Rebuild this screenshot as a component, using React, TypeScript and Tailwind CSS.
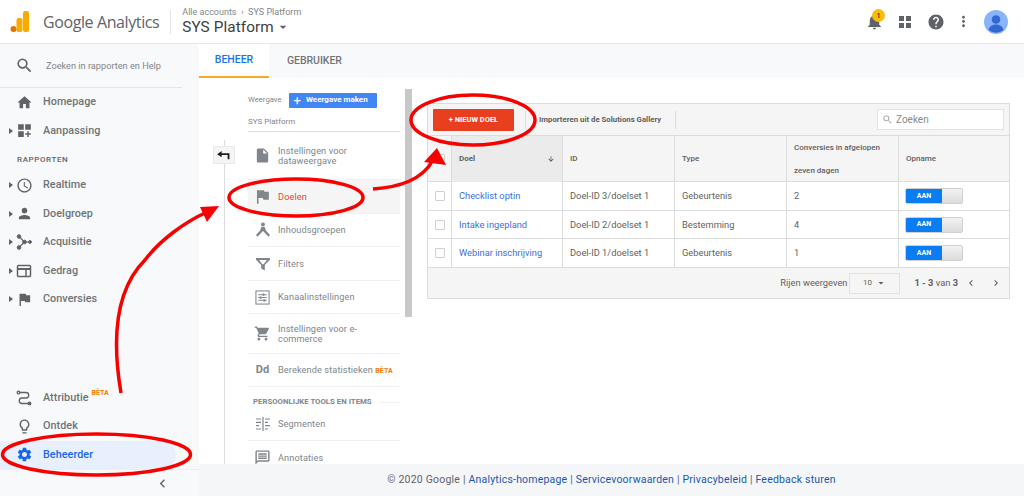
import type { ReactNode } from "react";
import {
  MdAccessTime,
  MdArrowDownward,
  MdArrowDropDown,
  MdChevronLeft,
  MdChevronRight,
  MdDashboardCustomize,
  MdFlag,
  MdHelp,
  MdHome,
  MdInsertDriveFile,
  MdLightbulbOutline,
  MdMoreVert,
  MdNotifications,
  MdOutlineMessage,
  MdPerson,
  MdSearch,
  MdSettings,
  MdShoppingCart,
} from "react-icons/md";

function AcquisitionIcon() {
  return (
    <svg viewBox="0 0 16 16" className="h-4 w-4 fill-[#5f6368] stroke-[#5f6368]">
      <circle cx="3" cy="2.5" r="1.8" />
      <circle cx="3" cy="13.5" r="1.8" />
      <circle cx="8.5" cy="8" r="1.8" />
      <circle cx="14" cy="8" r="1.4" />
      <path d="M3 2.5 8.5 8 3 13.5M8.5 8H14" fill="none" strokeWidth="1.2" />
    </svg>
  );
}

function BehaviourIcon() {
  return (
    <svg viewBox="0 0 16 16" className="h-4 w-4 fill-none stroke-[#5f6368]" strokeWidth="1.5">
      <rect x="1.5" y="2.5" width="13" height="11" rx="1" />
      <path d="M1.5 6h13" strokeWidth="2" />
      <path d="M10 6v7.5" />
    </svg>
  );
}

function AttributionIcon() {
  return (
    <svg viewBox="0 0 16 16" className="h-4 w-4 fill-none stroke-[#5f6368]" strokeWidth="1.3">
      <circle cx="2.5" cy="2.5" r="1.3" />
      <circle cx="13.5" cy="13.5" r="1.3" fill="#5f6368" />
      <path d="M4 2.5h6a2.7 2.7 0 0 1 0 5.5H6a2.7 2.7 0 0 0 0 5.5h6" />
    </svg>
  );
}

function GroupsIcon() {
  return (
    <svg viewBox="0 0 16 16" className="h-4 w-4 fill-[#80868b]">
      <circle cx="8" cy="2.6" r="2" />
      <path d="M6.3 5h3.4l1.2 3.4L15 13l-1.500 1.800-4-4.200-1.500-1.700-1.500 1.700-4 4.200L1 13l4.100-4.600z" />
    </svg>
  );
}

function FilterIcon() {
  return (
    <svg viewBox="0 0 16 16" className="h-4 w-4">
      <path d="M1 2h14v1.800L9.800 9v5.500L6.200 12.500V9L1 3.800zM4 4l3.400 4.200h1.200L12 4z" fill="#80868b" fillRule="evenodd" />
    </svg>
  );
}

function ChannelIcon() {
  return (
    <svg viewBox="0 0 16 16" className="h-[15px] w-[15px] fill-none stroke-[#80868b]" strokeWidth="1.1">
      <rect x="1" y="1" width="14" height="14" />
      <path d="M3.500 5h9M3.500 8h9M3.500 11h9" />
      <path d="M9 3.800v2.400M6 6.800v2.400M10 9.800v2.400" strokeWidth="1.8" />
    </svg>
  );
}

function SegmentsIcon() {
  return (
    <svg viewBox="0 0 16 16" className="h-4 w-4 fill-none stroke-[#80868b]" strokeWidth="1.2">
      <path d="M8 1v14M1 3h5M1 6.300h5M1 9.700h3M1 13h5M10 3h5M10 6.300h3M10 9.700h5M10 13h3" />
    </svg>
  );
}

function BackIcon() {
  return (
    <svg viewBox="0 0 14 12" className="h-[11px] w-[13px] fill-[#202124]">
      <path d="M0 4.500 5 1v2.500h8.500V10H11.500V5.500H5V8z" />
    </svg>
  );
}

function SideItem({
  icon,
  label,
  caret,
  badge,
  active,
}: {
  icon: ReactNode;
  label: string;
  caret?: boolean;
  badge?: boolean;
  active?: boolean;
}) {
  return (
    <div
      className={`flex h-[28.5px] w-[176px] shrink-0 items-center rounded-r-[14px] ${active ? "bg-[#e8f0fe] text-[#1a66e8]" : "text-[#6f7377]"}`}
    >
      <span className="flex w-[13px] justify-end">
        {caret && <span className="h-0 w-0 border-y-[3px] border-l-[4px] border-y-transparent border-l-[#5f6368]" />}
      </span>
      <span className="flex w-[22px] justify-center">{icon}</span>
      <span className="ml-[8px] text-[10.8px] font-medium tracking-[0.05px]">{label}</span>
      {badge && <span className="mb-[9px] ml-[3px] text-[7px] font-bold text-[#f57c00]">BÈTA</span>}
    </div>
  );
}

function Sidebar() {
  const ic = "h-[17px] w-[17px] text-[#5f6368]";
  return (
    <aside className="flex w-[199px] shrink-0 flex-col bg-[#f8f9fa]">
      <div className="flex h-[44px] w-[182px] shrink-0 items-center border-b border-[#e3e5e8] pl-[15px]">
        <MdSearch className="h-[19px] w-[19px] text-[#5f6368]" />
        <span className="ml-[12px] whitespace-nowrap text-[9.2px] text-[#80868b]">Zoeken in rapporten en Help</span>
      </div>
      <SideItem icon={<MdHome className={ic} />} label="Homepage" />
      <SideItem caret icon={<MdDashboardCustomize className={ic} />} label="Aanpassing" />
      <div className="flex h-[26px] shrink-0 items-center pl-[17px] pt-[4px] text-[8px] font-medium tracking-[0.6px] text-[#5f6368]">RAPPORTEN</div>
      <SideItem caret icon={<MdAccessTime className={ic} />} label="Realtime" />
      <SideItem caret icon={<MdPerson className={ic} />} label="Doelgroep" />
      <SideItem caret icon={<AcquisitionIcon />} label="Acquisitie" />
      <SideItem caret icon={<BehaviourIcon />} label="Gedrag" />
      <SideItem caret icon={<MdFlag className={ic} />} label="Conversies" />
      <div className="flex-1" />
      <SideItem icon={<AttributionIcon />} label="Attributie" badge />
      <SideItem icon={<MdLightbulbOutline className={ic} />} label="Ontdek" />
      <SideItem active icon={<MdSettings className="h-[17px] w-[17px] text-[#1a66e8]" />} label="Beheerder" />
      <div className="flex h-[27px] shrink-0 items-center justify-end border-t border-[#eceef0] pr-[28px]">
        <MdChevronLeft className="h-[17px] w-[17px] text-[#5f6368]" />
      </div>
    </aside>
  );
}

function NavItem({
  icon,
  children,
  h,
  selected,
  last,
}: {
  icon: ReactNode;
  children: ReactNode;
  h: string;
  selected?: boolean;
  last?: boolean;
}) {
  return (
    <div className={`flex shrink-0 items-center ${h} ${selected ? "bg-[#f5f5f5] text-[#ea4335]" : "text-[#80868b]"} ${last ? "" : "border-b border-[#f1f1f1]"}`}>
      <span className="ml-[3px] flex w-[23px] justify-center">{icon}</span>
      <span className="ml-[4px] whitespace-nowrap text-[9.2px] leading-[10px] tracking-[0.1px]">{children}</span>
    </div>
  );
}

function AdminNav() {
  const ic = "h-[17px] w-[17px] text-[#80868b]";
  return (
    <div className="flex w-[152px] shrink-0 flex-col pt-[13px]">
      <div className="flex h-[18px] shrink-0 items-center">
        <span className="text-[7.7px] text-[#80868b]">Weergave</span>
        <span className="ml-[7px] flex h-[15px] w-[88px] items-center rounded-[1px] bg-[#4285f4] pl-[5px] text-[8px] font-bold text-white">
          <span className="mr-[5px] text-[13px] font-normal leading-none">+</span>Weergave maken
        </span>
      </div>
      <div className="flex h-[23px] shrink-0 items-center border-b border-[#dadce0] pt-[3px] text-[8px] text-[#80868b]">SYS Platform</div>
      <NavItem h="h-[48px]" icon={<MdInsertDriveFile className={ic} />}>
        Instellingen voor
        <br />
        dataweergave
      </NavItem>
      <NavItem h="h-[34px]" selected icon={<MdFlag className="h-[19px] w-[19px] text-[#80868b]" />}>
        Doelen
      </NavItem>
      <NavItem h="h-[33px]" icon={<GroupsIcon />}>
        Inhoudsgroepen
      </NavItem>
      <NavItem h="h-[34px]" icon={<FilterIcon />}>
        Filters
      </NavItem>
      <NavItem h="h-[33px]" icon={<ChannelIcon />}>
        Kanaalinstellingen
      </NavItem>
      <NavItem h="h-[40px]" icon={<MdShoppingCart className={ic} />}>
        Instellingen voor e-
        <br />
        commerce
      </NavItem>
      <NavItem h="h-[33px]" icon={<span className="text-[11px] font-bold text-[#80868b]">Dd</span>}>
        Berekende statistieken <span className="text-[7px] font-bold text-[#f57c00]">BÈTA</span>
      </NavItem>
      <div className="flex h-[21px] shrink-0 items-center pl-[5px] pt-[9px]">
        <span className="whitespace-nowrap text-[7.8px] font-bold text-[#80868b]">PERSOONLIJKE TOOLS EN ITEMS</span>
        <span className="ml-[7px] h-px flex-1 bg-[#f1f1f1]" />
      </div>
      <NavItem h="h-[33px]" icon={<SegmentsIcon />}>
        Segmenten
      </NavItem>
      <NavItem h="h-[33px]" last icon={<MdOutlineMessage className={ic} />}>
        Annotaties
      </NavItem>
    </div>
  );
}

const goals = [
  { name: "Checklist optin", id: "Doel-ID 3/doelset 1", type: "Gebeurtenis", count: "2" },
  { name: "Intake ingepland", id: "Doel-ID 2/doelset 1", type: "Bestemming", count: "4" },
  { name: "Webinar inschrijving", id: "Doel-ID 1/doelset 1", type: "Gebeurtenis", count: "1" },
];

const gridCols = "grid grid-cols-[24px_111px_112px_112px_112px_1fr]";

function GoalsTable() {
  return (
    <div className="flex h-[196px] w-[583px] flex-col border border-[#dcdcdc] bg-[#f5f5f5]">
      <div className="flex h-[31px] shrink-0 items-center">
        <span className="ml-[5px] flex h-[22px] w-[81px] items-center justify-center rounded-[1px] bg-[#e8401f] text-[7.5px] font-bold text-white">
          + NIEUW DOEL
        </span>
        <span className="ml-[11px] h-[18px] w-px bg-[#dcdcdc]" />
        <span className="ml-[13px] text-[7.8px] font-bold text-[#5f5f5f]">Importeren uit de Solutions Gallery</span>
        <span className="ml-[14px] h-[18px] w-px bg-[#dcdcdc]" />
        <div className="ml-auto mr-[5px] flex h-[21px] w-[127px] items-center border border-[#e3e3e3] bg-white pl-[4px] text-[#8a8a8a]">
          <MdSearch className="h-[11px] w-[11px] text-[#a0a0a0]" />
          <span className="ml-[3px] text-[10px]">Zoeken</span>
        </div>
      </div>
      <div className={`${gridCols} h-[47px] shrink-0 border-y border-[#dcdcdc] text-[8px] font-medium text-[#5f5f5f]`}>
        <div className="flex items-center justify-center border-r border-[#dcdcdc]">
          <span className="h-[10px] w-[10px] rounded-[1px] border border-[#d0d0d0] bg-white" />
        </div>
        <div className="flex items-center justify-between border-r border-[#dcdcdc] bg-[#ebebeb] px-[7px] font-bold">
          Doel
          <MdArrowDownward className="h-[8px] w-[8px] text-[#444]" />
        </div>
        <div className="flex items-center border-r border-[#dcdcdc] px-[7px]">ID</div>
        <div className="flex items-center border-r border-[#dcdcdc] px-[7px]">Type</div>
        <div className="flex items-center border-r border-[#dcdcdc] px-[7px] leading-[23px]">
          <span>
            Conversies in afgelopen
            <br />
            zeven dagen
          </span>
        </div>
        <div className="flex items-center px-[7px]">Opname</div>
      </div>
      {goals.map((goal) => (
        <div key={goal.name} className={`${gridCols} h-[28.7px] shrink-0 border-b border-[#dcdcdc] bg-white text-[9.3px] text-[#5f5f5f]`}>
          <div className="flex items-center justify-center border-r border-[#dcdcdc]">
            <span className="h-[10px] w-[10px] rounded-[1px] border border-[#d0d0d0]" />
          </div>
          <div className="flex items-center border-r border-[#dcdcdc] px-[7px] text-[#3b6ee0]">{goal.name}</div>
          <div className="flex items-center border-r border-[#dcdcdc] px-[7px]">{goal.id}</div>
          <div className="flex items-center border-r border-[#dcdcdc] px-[7px]">{goal.type}</div>
          <div className="flex items-center border-r border-[#dcdcdc] px-[7px]">{goal.count}</div>
          <div className="flex items-center pl-[6px]">
            <span className="flex h-[16px] w-[58px] overflow-hidden rounded-[2px] border border-[#cfcfcf]">
              <span className="flex w-[36px] items-center justify-center bg-[#0a7df2] text-[7px] font-bold text-white">AAN</span>
              <span className="flex-1 bg-gradient-to-b from-[#f2f2f2] to-[#dcdcdc]" />
            </span>
          </div>
        </div>
      ))}
      <div className="flex flex-1 items-center justify-end text-[9.3px] text-[#5f5f5f]">
        <span>Rijen weergeven</span>
        <span className="ml-[2px] flex h-[21px] w-[51px] items-center justify-center border border-[#e3e3e3] text-[8px]">
          10
          <MdArrowDropDown className="ml-[3px] h-[12px] w-[12px]" />
        </span>
        <span className="ml-[14px]">
          <b>1 - 3</b> van <b>3</b>
        </span>
        <MdChevronLeft className="ml-[7px] h-[12px] w-[12px]" />
        <MdChevronRight className="ml-[13px] mr-[7px] h-[12px] w-[12px]" />
      </div>
    </div>
  );
}

function Annotations() {
  return (
    <svg viewBox="0 0 1024 496" className="pointer-events-none absolute left-0 top-0 h-[496px] w-[1024px]">
      <g fill="none" stroke="#f80000" strokeWidth="3.5">
        <ellipse cx="96.500" cy="454.500" rx="94" ry="20.500" />
        <ellipse cx="296" cy="197.500" rx="67" ry="18.500" />
        <ellipse cx="473" cy="120" rx="62" ry="25" />
        <path d="M121 393C112 340 115 290 145 260 160 240 185 222 207 212" />
        <path d="M373 189C400 187 422 180 433 160" />
      </g>
      <path d="M200 207 219 206 207 222z" fill="#f80000" />
      <path d="M424 162 446 165 437 148z" fill="#f80000" />
    </svg>
  );
}

export default function App() {
  return (
    <div className="relative flex h-[496px] w-[1024px] flex-col overflow-hidden bg-white font-['Roboto',sans-serif]">
      <header className="flex h-[44px] shrink-0 items-center border-b border-[#e6e8ea] bg-white">
        <svg viewBox="0 0 20 22" className="ml-[10px] h-[22px] w-[20px]">
          <rect x="13" y="0" width="6" height="21" rx="2" fill="#f9ab00" />
          <rect x="6.500" y="7" width="6" height="14" rx="2" fill="#f9ab00" />
          <circle cx="3.500" cy="18" r="3" fill="#e37400" />
        </svg>
        <span className="ml-[13px] whitespace-nowrap font-['Open_Sans',sans-serif] text-[16px] tracking-[-0.4px] text-[#5f6368]">Google Analytics</span>
        <span className="ml-[11px] h-[24px] w-px bg-[#e3e5e8]" />
        <div className="ml-[11px] flex flex-col">
          <span className="text-[9px] leading-[11px] text-[#80868b]">Alle accounts &nbsp;›&nbsp; SYS Platform</span>
          <span className="flex items-center text-[15.3px] leading-[19px] tracking-[0.1px] text-[#3c4043]">
            SYS Platform
            <MdArrowDropDown className="ml-[1px] h-[16px] w-[16px] text-[#5f6368]" />
          </span>
        </div>
        <div className="ml-auto flex items-center">
          <span className="relative flex">
            <MdNotifications className="h-[19px] w-[19px] text-[#5f6368]" />
            <span className="absolute left-[7px] top-[-3px] flex h-[13px] w-[13px] items-center justify-center rounded-full bg-[#fbbc04] text-[8px] font-medium text-[#3c4043]">1</span>
          </span>
          <svg viewBox="0 0 12 12" className="ml-[15px] h-[12px] w-[12px] fill-[#5f6368]">
            <rect width="5" height="5" />
            <rect x="7" width="5" height="5" />
            <rect y="7" width="5" height="5" />
            <rect x="7" y="7" width="5" height="5" />
          </svg>
          <MdHelp className="ml-[16px] h-[18px] w-[18px] text-[#5f6368]" />
          <MdMoreVert className="ml-[10px] h-[17px] w-[17px] text-[#5f6368]" />
          <svg viewBox="0 0 24 24" className="ml-[12px] mr-[16px] h-[24px] w-[24px]">
            <circle cx="12" cy="12" r="12" fill="#8ab4f8" />
            <circle cx="12" cy="9.500" r="4.300" fill="#3367d6" />
            <path d="M4.500 20c1-4 4-5.500 7.500-5.500s6.500 1.500 7.500 5.500A12 12 0 0 1 4.500 20z" fill="#3367d6" />
          </svg>
        </div>
      </header>
      <div className="flex min-h-0 flex-1">
        <Sidebar />
        <div className="flex min-w-0 flex-1 flex-col">
          <div className="flex h-[34px] shrink-0 bg-[#f8f9fa] text-[10.5px] font-medium">
            <span className="flex w-[70px] items-center justify-center border-b-2 border-[#f9a825] bg-white text-[#1a73e8]">BEHEER</span>
            <span className="ml-[18px] flex items-center tracking-[-0.05px] text-[#70757a]">GEBRUIKER</span>
          </div>
          <div className="flex min-h-0 flex-1 overflow-hidden">
            <div className="relative flex w-[49px] shrink-0 justify-center pt-[68px]">
              <span className="absolute bottom-0 left-[25px] top-[62px] w-px bg-[#dadce0]" />
              <span className="relative flex h-[18px] w-[22px] items-center justify-center border border-[#e8e8e8] bg-[#f5f5f5]">
                <BackIcon />
              </span>
            </div>
            <AdminNav />
            <div className="ml-[5px] mt-[11px] h-[228px] w-[7px] shrink-0 bg-[#c8c8c8]" />
            <div className="ml-[15px] pt-[25px]">
              <GoalsTable />
            </div>
          </div>
          <footer className="flex h-[32px] shrink-0 items-center justify-center bg-[#f5f6f7] text-[10.5px] tracking-[0.2px] text-[#5f6368]">
            © 2020 Google |&nbsp;<span className="text-[#1a56b0]">Analytics-homepage</span>&nbsp;|&nbsp;
            <span className="text-[#1a56b0]">Servicevoorwaarden</span>&nbsp;|&nbsp;
            <span className="text-[#1a56b0]">Privacybeleid</span>&nbsp;|&nbsp;
            <span className="text-[#1a56b0]">Feedback sturen</span>
          </footer>
        </div>
      </div>
      <Annotations />
    </div>
  );
}
